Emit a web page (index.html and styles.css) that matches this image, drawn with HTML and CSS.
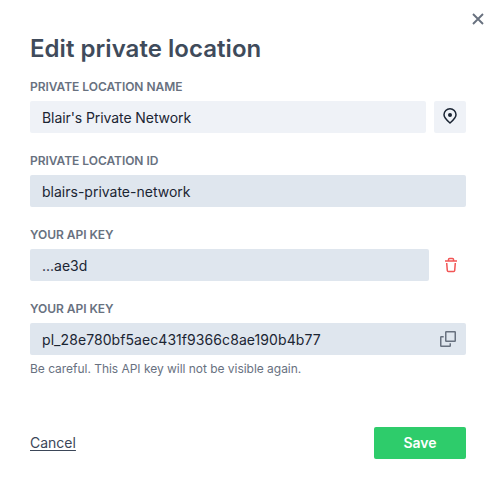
FILE: index.html
```html
<!DOCTYPE html>
<html lang="en">
<head>
<meta charset="utf-8">
<title>Edit private location</title>
<link rel="stylesheet" href="styles.css">
</head>
<body>
<main class="dialog">
  <button class="close" aria-label="Close"><svg width="12" height="12" viewBox="0 0 12 12"><path d="M1 1l10 10M11 1L1 11"/></svg></button>
  <h1>Edit private location</h1>
  <section class="field">
    <label>Private location name</label>
    <div class="row">
      <div class="input editable name">Blair's Private Network</div>
      <button class="pin" aria-label="Choose icon"><svg width="14" height="16" viewBox="0 0 14 16"><path d="M7 15C4.500 12.800 1 10 1 6.800a6 6 0 0 1 12 0C13 10 9.500 12.800 7 15z"/><circle class="dot" cx="7" cy="7" r="2"/></svg></button>
    </div>
  </section>
  <section class="field">
    <label>Private location ID</label>
    <div class="row"><div class="input">blairs-private-network</div></div>
  </section>
  <section class="field">
    <label>Your API key</label>
    <div class="row">
      <div class="input">...ae3d</div>
      <button class="trash" aria-label="Delete"><svg width="12" height="16" viewBox="0 0 12 16"><path d="M0 4h12M3.500 4V2.500q0-1 1-1h3q1 0 1 1V4M1.700 6l.6 7.500q.1 1 1.100 1h5.200q1 0 1.100-1l.6-7.500"/></svg></button>
    </div>
  </section>
  <section class="field">
    <label>Your API key</label>
    <div class="row"><div class="input key">pl_28e780bf5aec431f9366c8ae190b4b77<svg class="copy" width="16" height="16" viewBox="0 0 16 16"><rect x="5.750" y=".75" width="9.500" height="9.500" rx=".5"/><path d="M3.700 5.750H1.250q-.5 0-.5.5v8.500q0 .5.5.5h8.500q.5 0 .5-.5V12.300"/></svg></div></div>
    <p class="hint">Be careful. This API key will not be visible again.</p>
  </section>
  <footer>
    <a class="cancel">Cancel</a>
    <button class="save">Save</button>
  </footer>
</main>
</body>
</html>
```
FILE: styles.css
```css
* { box-sizing: border-box; }
body { margin: 0; background: #fff; font-family: Inter, sans-serif; color: #1b2533; }
button { border: 0; padding: 0; background: none; font: inherit; color: inherit; display: flex; align-items: center; justify-content: center; }
svg { fill: none; stroke: currentColor; stroke-width: 1.5; flex: none; }
.dialog { position: relative; height: 488px; padding: 33px 30px 0; }
.close { position: absolute; left: 470px; top: 11px; width: 16px; height: 16px; color: #68717f; }
.close svg { stroke-width: 1.9; }
h1 { margin: 0 0 -1px; font-size: 24px; line-height: 32px; font-weight: 600; letter-spacing: .04px; color: #3f4b5b; }
.field { height: 74px; padding-top: 15px; }
label { display: block; font-size: 12px; line-height: 16px; font-weight: 600; letter-spacing: -.04px; color: #68717f; text-transform: uppercase; margin-bottom: 6px; }
.row { display: flex; gap: 8px; }
.input { flex: 1; height: 32px; display: flex; align-items: center; justify-content: space-between; padding: 0 10px 0 12px; border-radius: 2px; background: #dfe6ee; font-size: 14px; }
.editable, .pin { background: #eff2f7; }
.name { letter-spacing: -.08px; }
.key { letter-spacing: .07px; }
.pin { width: 32px; height: 32px; border-radius: 2px; padding-bottom: 2px; }
.dot { fill: currentColor; stroke: none; }
.trash { width: 29px; height: 32px; padding: 0 2px 1px 0; color: #f25555; }
.copy { color: #68717f; }
.hint { margin: 6px 0 0; font-size: 12px; line-height: 16px; letter-spacing: -.03px; color: #68717f; }
footer { display: flex; justify-content: space-between; align-items: center; margin-top: 67px; }
.cancel { font-size: 14px; color: #3b4658; text-decoration: underline; text-underline-offset: 2px; padding-bottom: 2px; }
.save { width: 92px; height: 32px; border-radius: 2px; background: #2ecc6b; color: #fff; font-size: 14px; font-weight: 600; padding-bottom: 2px; }
```
